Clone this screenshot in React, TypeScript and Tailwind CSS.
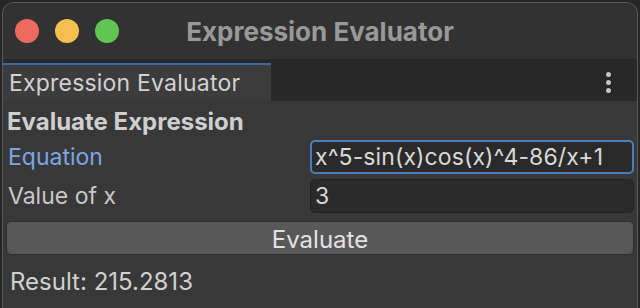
import { useState } from "react";

export default function App() {
  const [equation, setEquation] = useState("x^5-sin(x)cos(x)^4-86/x+1");
  const [xValue, setXValue] = useState("3");

  return (
    <div
      className="w-[640px] h-[308px] bg-[#262626] overflow-hidden"
      style={{ fontFamily: "Inter, 'Noto Sans', sans-serif" }}
    >
      <div className="mt-[2px] ml-[2px] h-[306px] w-[636px] rounded-t-[12px] border-t border-x border-[#5a5a5a] bg-[#383838] flex flex-col overflow-hidden">
        {/* Title bar */}
        <div className="h-[56px] shrink-0 bg-[#323232] flex items-center relative">
          <div className="flex items-center gap-[16px] pl-[12px]">
            <span className="w-[24px] h-[24px] rounded-full bg-[#ed6a5e]" />
            <span className="w-[24px] h-[24px] rounded-full bg-[#f5bf4f]" />
            <span className="w-[24px] h-[24px] rounded-full bg-[#61c554]" />
          </div>
          <div className="absolute inset-0 flex items-center justify-center text-[26px] font-bold text-[#999999]">
            Expression Evaluator
          </div>
        </div>

        {/* Tab bar */}
        <div className="h-[42px] shrink-0 bg-[#282828] flex items-end">
          <div className="h-[38px] w-[268px] bg-[#3c3c3c] border-t-2 border-[#3e6aa3] flex items-center pl-[6px] text-[23px] tracking-[0.2px] text-[#d2d2d2]">
            Expression Evaluator
          </div>
          <div className="flex-1" />
          <div className="h-[38px] flex flex-col items-center justify-center gap-[3px] pr-[26px]">
            <span className="w-[5px] h-[5px] rounded-full bg-[#c4c4c4]" />
            <span className="w-[5px] h-[5px] rounded-full bg-[#c4c4c4]" />
            <span className="w-[5px] h-[5px] rounded-full bg-[#c4c4c4]" />
          </div>
        </div>

        {/* Content */}
        <div className="flex-1 px-[3px] pt-[6px] flex flex-col text-[23px]">
          <div className="pl-[1px] h-[30px] flex items-center font-bold text-[24px] text-[#cfcfcf]">
            Evaluate Expression
          </div>
          <div className="flex items-center h-[34px] mt-[3px]">
            <div className="w-[304px] shrink-0 pl-[2px] text-[#7ba6e6]">Equation</div>
            <input
              value={equation}
              onChange={(e) => setEquation(e.target.value)}
              className="flex-1 min-w-0 h-[34px] rounded-[5px] border-2 border-[#4a7cc2] bg-[#2a2a2a] px-[3px] text-[#d8d8d8] tracking-[0.1px] outline-none"
            />
          </div>
          <div className="flex items-center h-[34px] mt-[5px]">
            <div className="w-[304px] shrink-0 pl-[2px] text-[#c8c8c8]">Value of x</div>
            <input
              value={xValue}
              onChange={(e) => setXValue(e.target.value)}
              className="flex-1 min-w-0 h-[34px] rounded-[5px] border border-[#222222] bg-[#2a2a2a] px-[4px] text-[#d8d8d8] outline-none"
            />
          </div>
          <button className="mt-[8px] h-[34px] rounded-[5px] bg-[#585858] border border-[#2e2e2e] text-[#e2e2e2] text-[24px]">
            Evaluate
          </button>
          <div className="pl-[4px] mt-[9px] text-[24px] text-[#d0d0d0]">Result: 215.2813</div>
        </div>
      </div>
    </div>
  );
}
